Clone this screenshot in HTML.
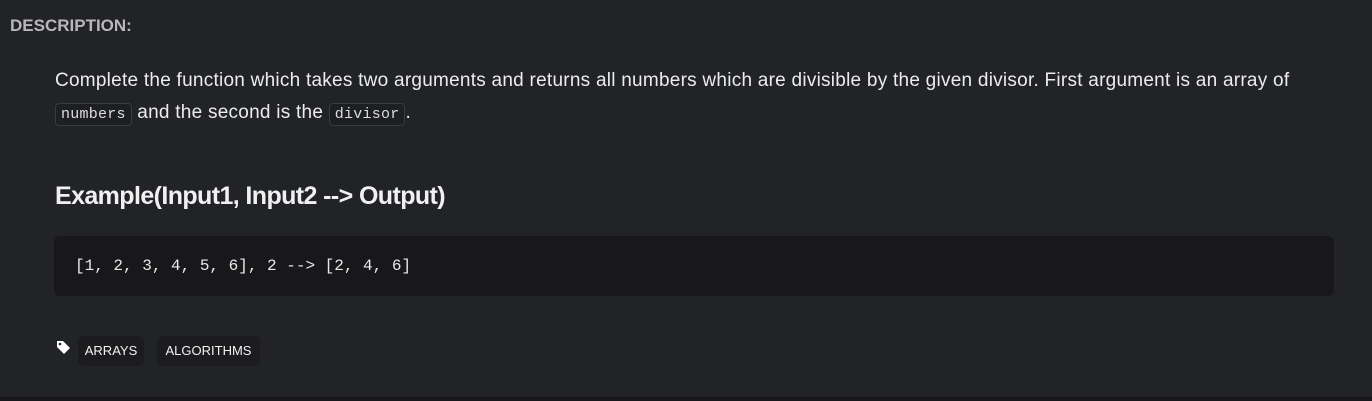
<!DOCTYPE html>
<html><head><style>
body{margin:0;width:1372px;height:401px;background:#222327;font-family:"Liberation Sans",sans-serif;position:relative;overflow:hidden}
.a{position:absolute}
code{font-family:"Liberation Mono",monospace;font-size:15px;background:#1e1f22;border:1px solid #3a3b3f;border-radius:4px;padding:2px 5px;color:#ddd}
.tag{position:absolute;top:336px;height:30px;line-height:30px;background:#1c1c1f;border-radius:5px;color:#f2f2f2;font-size:13px;text-align:center}
</style></head><body>
<div class="a" style="left:10px;top:16px;font-weight:bold;font-size:17px;color:#b8b8b8;letter-spacing:0px">DESCRIPTION:</div>
<div class="a" style="left:55px;top:65px;width:1300px;font-size:19px;line-height:32px;color:#ececec;letter-spacing:0.25px">Complete the function which takes two arguments and returns all numbers which are divisible by the given divisor. First argument is an array of<br><code>numbers</code> and the second is the <code>divisor</code>.</div>
<div class="a" style="left:55px;top:182px;font-weight:bold;font-size:25px;color:#f0f0f0;letter-spacing:-0.6px">Example(Input1, Input2 --&gt; Output)</div>
<div class="a" style="left:54px;top:236px;width:1280px;height:60px;background:#18181a;border-radius:6px"></div>
<div class="a" style="left:75px;top:257px;font-family:'Liberation Mono',monospace;font-size:16px;color:#e8e8e8">[1, 2, 3, 4, 5, 6], 2 --&gt; [2, 4, 6]</div>
<svg class="a" style="left:56px;top:340px" width="16" height="16" viewBox="0 0 16 16"><path d="M1 1h6l7 7-6 6-7-7z" fill="#fff"/><circle cx="4" cy="4" r="1.3" fill="#222327"/></svg>
<div class="tag" style="left:78px;width:66px">ARRAYS</div>
<div class="tag" style="left:157px;width:103px">ALGORITHMS</div>
<div class="a" style="left:0;top:397px;width:1372px;height:4px;background:#17171a"></div>
</body></html>
